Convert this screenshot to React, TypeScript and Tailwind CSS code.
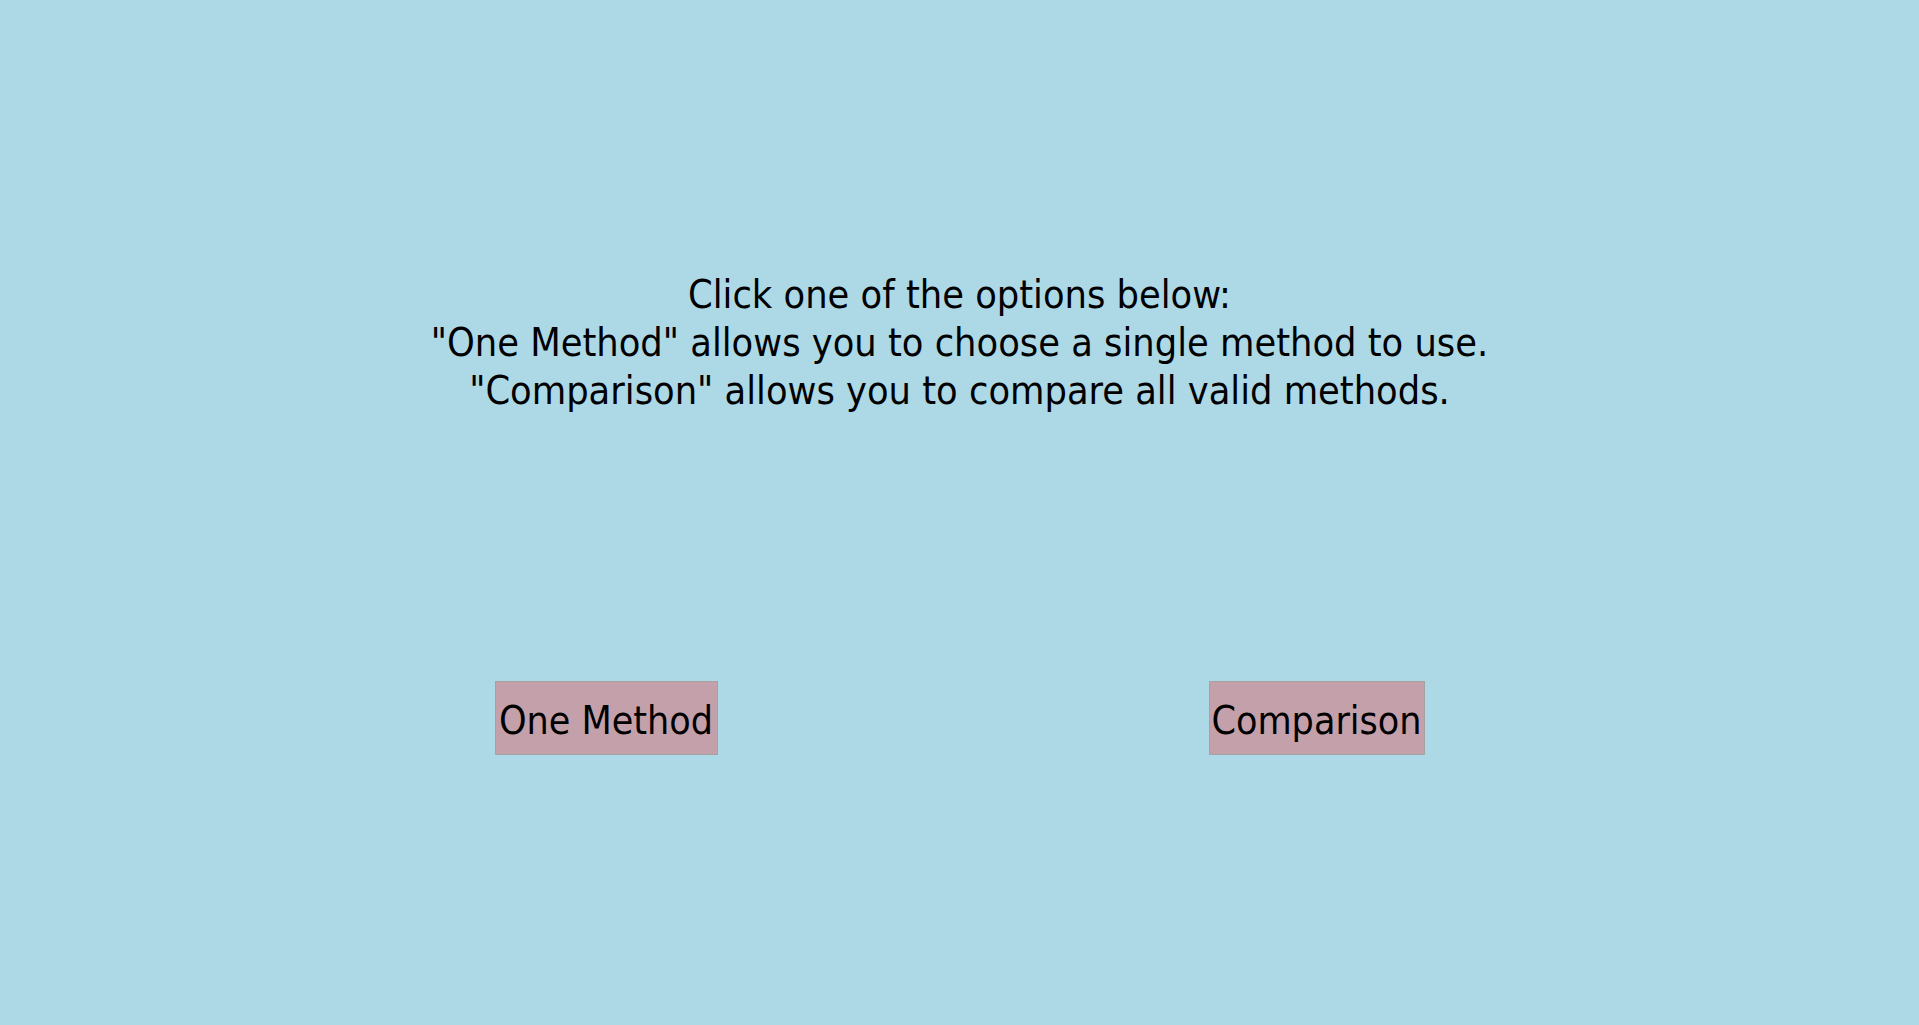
export default function App() {
  return (
    <div
      className="min-h-screen w-full bg-[#add8e6] text-black"
      style={{ fontFamily: '"DejaVu Sans Condensed", "DejaVu Sans", sans-serif' }}
    >
      <div className="flex flex-col items-center pt-[271px] text-center text-[39.3px] leading-[48px]">
        <p>Click one of the options below:</p>
        <p>"One Method" allows you to choose a single method to use.</p>
        <p>"Comparison" allows you to compare all valid methods.</p>
      </div>

      <div className="mt-[266px] flex justify-center gap-[491px]">
        <button className="h-[74px] w-[223px] border border-[#a3a3a3] bg-[#c4a0aa] pt-[4px] text-[39px] leading-none text-black">
          One Method
        </button>
        <button className="h-[74px] w-[216px] border border-[#a3a3a3] bg-[#c4a0aa] pt-[4px] text-[39px] leading-none text-black">
          Comparison
        </button>
      </div>
    </div>
  );
}
